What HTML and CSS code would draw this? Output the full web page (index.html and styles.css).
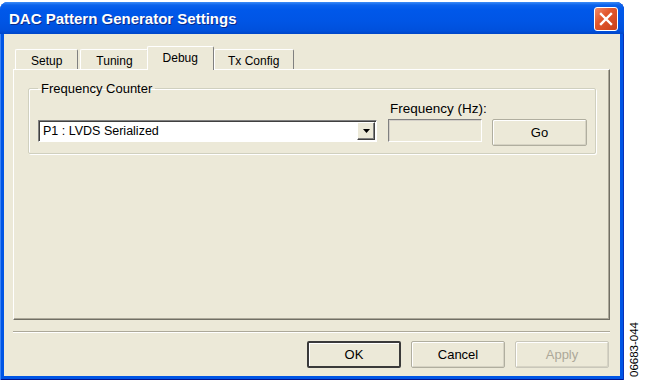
FILE: index.html
```html
<!DOCTYPE html>
<html lang="en">
<head>
  <meta charset="UTF-8" />
  <title>DAC Pattern Generator Settings</title>
  <link rel="stylesheet" href="styles.css">
</head>
<body>

  <div class="stage">
    <div class="window">
      <div class="titlebar">
        <span class="title">DAC Pattern Generator Settings</span>
        <button class="close" title="Close">
          <svg width="14" height="14" viewBox="0 0 14 14">
            <path d="M2 2 L12 12 M12 2 L2 12" stroke="#fff" stroke-width="2.4" stroke-linecap="square"/>
          </svg>
        </button>
      </div>

      <div class="client">
        <div class="tabs">
          <div class="tab">Setup</div>
          <div class="tab">Tuning</div>
          <div class="tab active">Debug</div>
          <div class="tab">Tx Config</div>
        </div>

        <div class="panel">
          <fieldset class="group">
            <legend>Frequency Counter</legend>
            <div class="row">
              <div class="combo">
                <span class="combo-text">P1 : LVDS Serialized</span>
                <span class="drop">
                  <svg width="7" height="4" viewBox="0 0 7 4"><path d="M0 0 H7 L3.5 4 Z" fill="#000"/></svg>
                </span>
              </div>
              <div class="field">
                <label>Frequency (Hz):</label>
                <div class="textbox"></div>
              </div>
              <button class="btn go">Go</button>
            </div>
          </fieldset>
        </div>

        <div class="sep"></div>

        <div class="actions">
          <button class="btn default">OK</button>
          <button class="btn">Cancel</button>
          <button class="btn disabled">Apply</button>
        </div>
      </div>
    </div>

    <div class="fignum">06683-044</div>
  </div>

</body>
</html>
```

FILE: styles.css
```css
body {
  margin: 0;
  background: #fff;
  font-family: "Liberation Sans", Arial, sans-serif;
  font-size: 12px;
  color: #000;
}
.stage {
  display: flex;
  align-items: flex-end;
  gap: 4px;
  width: 645px;
  height: 380px;
}
.window {
  width: 624px;
  height: 378px;
  display: flex;
  flex-direction: column;
  background: #0055e5;
  border-radius: 8px 8px 0 0;
  box-sizing: border-box;
  padding: 0 4px 4px 4px;
  box-shadow: inset 1px 0 #3b83f5, inset -1px 0 #0831b8, inset 0 -1px #00138c;
}
.titlebar {
  height: 32px;
  margin: 0 -4px;
  padding: 0 6px 0 9px;
  display: flex;
  align-items: center;
  justify-content: space-between;
  border-radius: 8px 8px 0 0;
  background: linear-gradient(#3d8df7 0, #0b62ec 3px, #0058ea 8px, #0055e5 60%, #0050dc 90%, #0046c8 100%);
}
.title {
  color: #fff;
  font-weight: bold;
  font-size: 15px;
  text-shadow: 1px 1px #0a2a8a;
}
.close {
  width: 24px;
  height: 24px;
  margin-top: 1px;
  padding: 0;
  border: 1px solid #fff;
  border-radius: 3px;
  background: linear-gradient(135deg, #f08a6a 0, #e2572d 40%, #c8401a 100%);
  display: flex;
  align-items: center;
  justify-content: center;
}
.client {
  flex: 1;
  background: #ece9d8;
  padding: 12px 10px 8px 9px;
  display: flex;
  flex-direction: column;
}
.tabs {
  display: flex;
  align-items: flex-end;
  padding-left: 2px;
  height: 23px;
}
.tab {
  height: 20px;
  box-sizing: border-box;
  padding: 4px 15px 0 15px;
  margin-right: 2px;
  border: 1px solid #fff;
  border-right-color: #808080;
  border-bottom: none;
  border-radius: 2px 2px 0 0;
  background: #ece9d8;
}
.tab:nth-child(2) {
  padding: 4px 14px 0 15px;
}
.tab.active {
  height: 24px;
  margin: 0 0 -1px -3px;
  padding: 4px 15px 0 15px;
  position: relative;
  background: #ece9d8;
}
.tab:last-child {
  padding: 4px 14px 0 13px;
}
.panel {
  height: 251px;
  box-sizing: border-box;
  border: 1px solid #fff;
  border-right-color: #716f64;
  border-bottom-color: #716f64;
  box-shadow: inset -1px -1px #aca899;
  padding: 11px 15px 0 14px;
}
.group {
  margin: 0;
  padding: 5px 8px 7px 9px;
  border: 1px solid #d0d0bf;
  box-shadow: 1px 1px #fff, inset 1px 1px #fff;
  border-radius: 2px;
}
.group legend {
  padding: 0 3px;
  margin-left: 0;
  color: #000;
  font-size: 13px;
}
.row {
  display: flex;
  align-items: flex-end;
}
.combo {
  width: 339px;
  height: 22px;
  box-sizing: border-box;
  display: flex;
  align-items: center;
  background: #fff;
  border: 1px solid #808080;
  border-right-color: #fff;
  border-bottom-color: #fff;
  box-shadow: inset 1px 1px #404040;
  margin-bottom: 4px;
  font-size: 12.5px;
}
.combo-text {
  flex: 1;
  padding-left: 4px;
}
.drop {
  width: 18px;
  height: 18px;
  margin-right: 1px;
  box-sizing: border-box;
  display: flex;
  align-items: center;
  justify-content: center;
  background: #ece9d8;
  border: 1px solid #fff;
  border-right-color: #404040;
  border-bottom-color: #404040;
  box-shadow: inset -1px -1px #808080;
}
.field {
  width: 94px;
  margin-left: 11px;
  display: flex;
  flex-direction: column;
  margin-bottom: 4px;
}
.field label {
  padding-left: 2px;
  margin-bottom: 3px;
  font-size: 13.5px;
  white-space: nowrap;
}
.textbox {
  width: 94px;
  height: 23px;
  box-sizing: border-box;
  background: #ece9d8;
  border: 1px solid #808080;
  border-right-color: #fff;
  border-bottom-color: #fff;
  box-shadow: inset 1px 1px #d4d0c8;
}
.btn {
  width: 94px;
  height: 27px;
  font-family: "Liberation Sans", Arial, sans-serif;
  font-size: 13px;
  color: #000;
  background: #ece9d8;
  border: 1px solid #b0ae9f;
  border-radius: 2px;
  box-shadow: inset 1px 1px #fff, inset -1px -1px #d6d3c4;
  padding: 0;
}
.btn.go {
  width: 95px;
  margin-left: 10px;
}
.sep {
  margin-top: 11px;
  height: 1px;
  background: #aca899;
  border-bottom: 1px solid #fff;
}
.actions {
  margin-top: 8px;
  display: flex;
  justify-content: flex-end;
  gap: 10px;
  padding-right: 1px;
}
.btn.default {
  border: 2px solid #3a3a3a;
  box-shadow: inset 1px 1px #fff;
}
.btn.disabled {
  color: #aca899;
  border-color: #c9c7ba;
}
.fignum {
  writing-mode: vertical-rl;
  transform: rotate(180deg);
  font-size: 11.5px;
  margin-bottom: 3px;
}
```
